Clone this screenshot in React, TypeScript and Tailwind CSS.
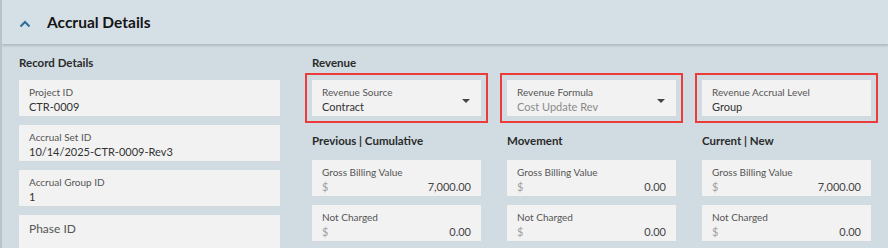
import React from 'react';

const FONT = { fontFamily: 'Lato, "Liberation Sans", sans-serif' };

type FieldProps = { label: string; value?: string; muted?: boolean; caret?: boolean; flagged?: boolean };

const Field: React.FC<FieldProps> = ({ label, value, muted, caret, flagged }) => (
  <div
    className={`relative h-[36px] bg-[#f2f2f2] shadow-[0_1px_0_#d3d8db] px-[10px] ${
      flagged ? 'outline-2 outline-offset-[5px] outline-[#ec3b3b]' : ''
    }`}
  >
    {value === undefined ? (
      <div className="pt-[7px] text-[12px] leading-[14px] text-[#555]">{label}</div>
    ) : (
      <div className="pt-[6px]">
        <div className="text-[10px] leading-[12px] text-[#555]">{label}</div>
        <div className={`mt-[2px] text-[11px] leading-[13px] ${muted ? 'text-[#8a8a8a]' : 'text-[#333]'}`}>{value}</div>
      </div>
    )}
    {caret && (
      <div className="absolute right-[11px] top-[19px] w-0 h-0 border-l-[4px] border-r-[4px] border-t-[4px] border-l-transparent border-r-transparent border-t-[#444]" />
    )}
  </div>
);

const Money: React.FC<{ label: string; value: string }> = ({ label, value }) => (
  <div className="h-[36px] bg-[#f2f2f2] shadow-[0_1px_0_#d3d8db] px-[10px] pt-[6px]">
    <div className="text-[10px] leading-[12px] text-[#555]">{label}</div>
    <div className="mt-[2px] flex justify-between text-[11px] leading-[13px]">
      <span className="text-[#a0a0a0]">$</span>
      <span className="text-[#444]">{value}</span>
    </div>
  </div>
);

const Heading: React.FC<{ children: React.ReactNode }> = ({ children }) => (
  <div className="text-[11.5px] leading-[14px] font-bold text-[#2b2b2b]">{children}</div>
);

const columns = [
  { title: 'Previous | Cumulative', gross: '7,000.00', nc: '0.00' },
  { title: 'Movement', gross: '0.00', nc: '0.00' },
  { title: 'Current | New', gross: '7,000.00', nc: '0.00' },
];

export default function App() {
  return (
    <div style={FONT} className="w-[888px] h-[248px] overflow-hidden bg-[#d0dce2] border-l-2 border-[#b8c2c7]">
      <div className="h-[44px] flex items-center bg-[#d5e0e6] shadow-[0_2px_2px_rgba(0,0,0,0.15)] relative">
        <svg width="12" height="8" viewBox="0 0 12 8" className="ml-[17px] mt-[3px]">
          <path d="M1.5 6.5 L6 2 L10.5 6.5" fill="none" stroke="#2b6d9b" strokeWidth="2" />
        </svg>
        <div className="ml-[16px] text-[15.5px] leading-[19px] font-bold text-[#151515]">Accrual Details</div>
      </div>
      <div className="flex pl-[17px] pt-[12px] gap-[32px]">
        <div className="w-[261px] flex flex-col">
          <Heading>Record Details</Heading>
          <div className="mt-[10px] flex flex-col gap-[9px]">
            <Field label="Project ID" value="CTR-0009" />
            <Field label="Accrual Set ID" value="10/14/2025-CTR-0009-Rev3" />
            <Field label="Accrual Group ID" value="1" />
            <Field label="Phase ID" />
          </div>
        </div>
        <div className="w-[559px] flex flex-col">
          <Heading>Revenue</Heading>
          <div className="mt-[10px] grid grid-cols-3 gap-x-[26px]">
            <Field label="Revenue Source" value="Contract" caret flagged />
            <Field label="Revenue Formula" value="Cost Update Rev" muted caret flagged />
            <Field label="Revenue Accrual Level" value="Group" flagged />
          </div>
          <div className="mt-[18px] grid grid-cols-3 gap-x-[26px]">
            {columns.map(c => (
              <div key={c.title} className="flex flex-col">
                <Heading>{c.title}</Heading>
                <div className="mt-[12px] flex flex-col gap-[9px]">
                  <Money label="Gross Billing Value" value={c.gross} />
                  <Money label="Not Charged" value={c.nc} />
                </div>
              </div>
            ))}
          </div>
        </div>
      </div>
    </div>
  );
}
